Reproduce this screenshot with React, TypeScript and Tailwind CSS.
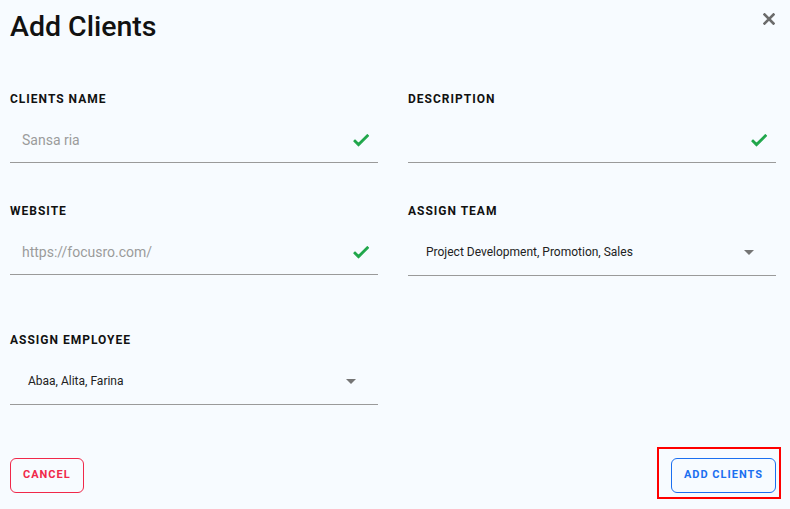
import React from 'react';

const CheckIcon = () => (
  <svg width="20" height="20" viewBox="0 0 24 24" className="shrink-0">
    <path d="M9 16.17L4.83 12l-1.42 1.41L9 19 21 7l-1.41-1.41z" fill="#1fa64a" stroke="#1fa64a" strokeWidth="1.4" strokeLinejoin="round" />
  </svg>
);

const DropIcon = () => (
  <svg width="24" height="24" viewBox="0 0 24 24" className="shrink-0">
    <path d="M7 10l5 5 5-5z" fill="#757575" />
  </svg>
);

function Label({ children }: { children: React.ReactNode }) {
  return (
    <div className="h-4 text-[12px] leading-4 font-bold tracking-[1px] text-[#111111]">{children}</div>
  );
}

function TextField({ label, value }: { label: string; value: string }) {
  return (
    <div>
      <Label>{label}</Label>
      <div className="mt-2 flex h-[48px] items-center border-b border-[#9a9a9a] pt-[3px] pl-3 pr-[7px]">
        <span className="flex-1 text-[14px] text-[#9b9b9b]">{value}</span>
        <CheckIcon />
      </div>
    </div>
  );
}

function SelectField({ label, value }: { label: string; value: string }) {
  return (
    <div>
      <Label>{label}</Label>
      <div className="mt-2 flex h-[49px] items-center border-b border-[#9a9a9a] pt-[2px] pl-[18px] pr-[15px]">
        <span className="flex-1 text-[12px] text-[#222222]">{value}</span>
        <DropIcon />
      </div>
    </div>
  );
}

export default function App() {
  return (
    <div
      className="min-h-[509px] w-[790px] bg-[#f7fbff] pl-[10px] pr-[14px]"
      style={{ fontFamily: 'Roboto, "Liberation Sans", sans-serif' }}
    >
      <div className="flex items-start justify-between pt-[10px]">
        <h1 className="text-[28.5px] leading-[34px] font-medium text-[#111111]">Add Clients</h1>
        <button className="mt-[3px] mr-[1px] text-[#6b6b6b]" aria-label="Close">
          <svg width="12" height="12" viewBox="0 0 12 12">
            <path d="M1.5 1.5l9 9M10.5 1.5l-9 9" stroke="#6b6b6b" strokeWidth="2.6" strokeLinecap="square" />
          </svg>
        </button>
      </div>

      <div className="mt-[47px] grid grid-cols-2 gap-x-[30px] gap-y-10">
        <TextField label="CLIENTS NAME" value="Sansa ria" />
        <TextField label="DESCRIPTION" value="" />
        <TextField label="WEBSITE" value="https://focusro.com/" />
        <SelectField label="ASSIGN TEAM" value="Project Development, Promotion, Sales" />
      </div>

      <div className="mt-[56px] grid grid-cols-2 gap-x-[30px]">
        <SelectField label="ASSIGN EMPLOYEE" value="Abaa, Alita, Farina" />
      </div>

      <div className="mt-[53px] flex items-center justify-between">
        <button className="h-[35px] rounded-md border border-[#f0284a] px-[12px] text-[11px] font-bold tracking-[1px] text-[#f0284a]">
          CANCEL
        </button>
        <div className="relative">
          <button className="h-[35px] rounded-md border border-[#1b6ff0] px-[12px] text-[11px] font-bold tracking-[1px] text-[#1b6ff0]">
            ADD CLIENTS
          </button>
          <div className="pointer-events-none absolute -top-[11px] -bottom-[6px] -left-[14px] -right-[5px] border-2 border-[#ff0000]" />
        </div>
      </div>
    </div>
  );
}
